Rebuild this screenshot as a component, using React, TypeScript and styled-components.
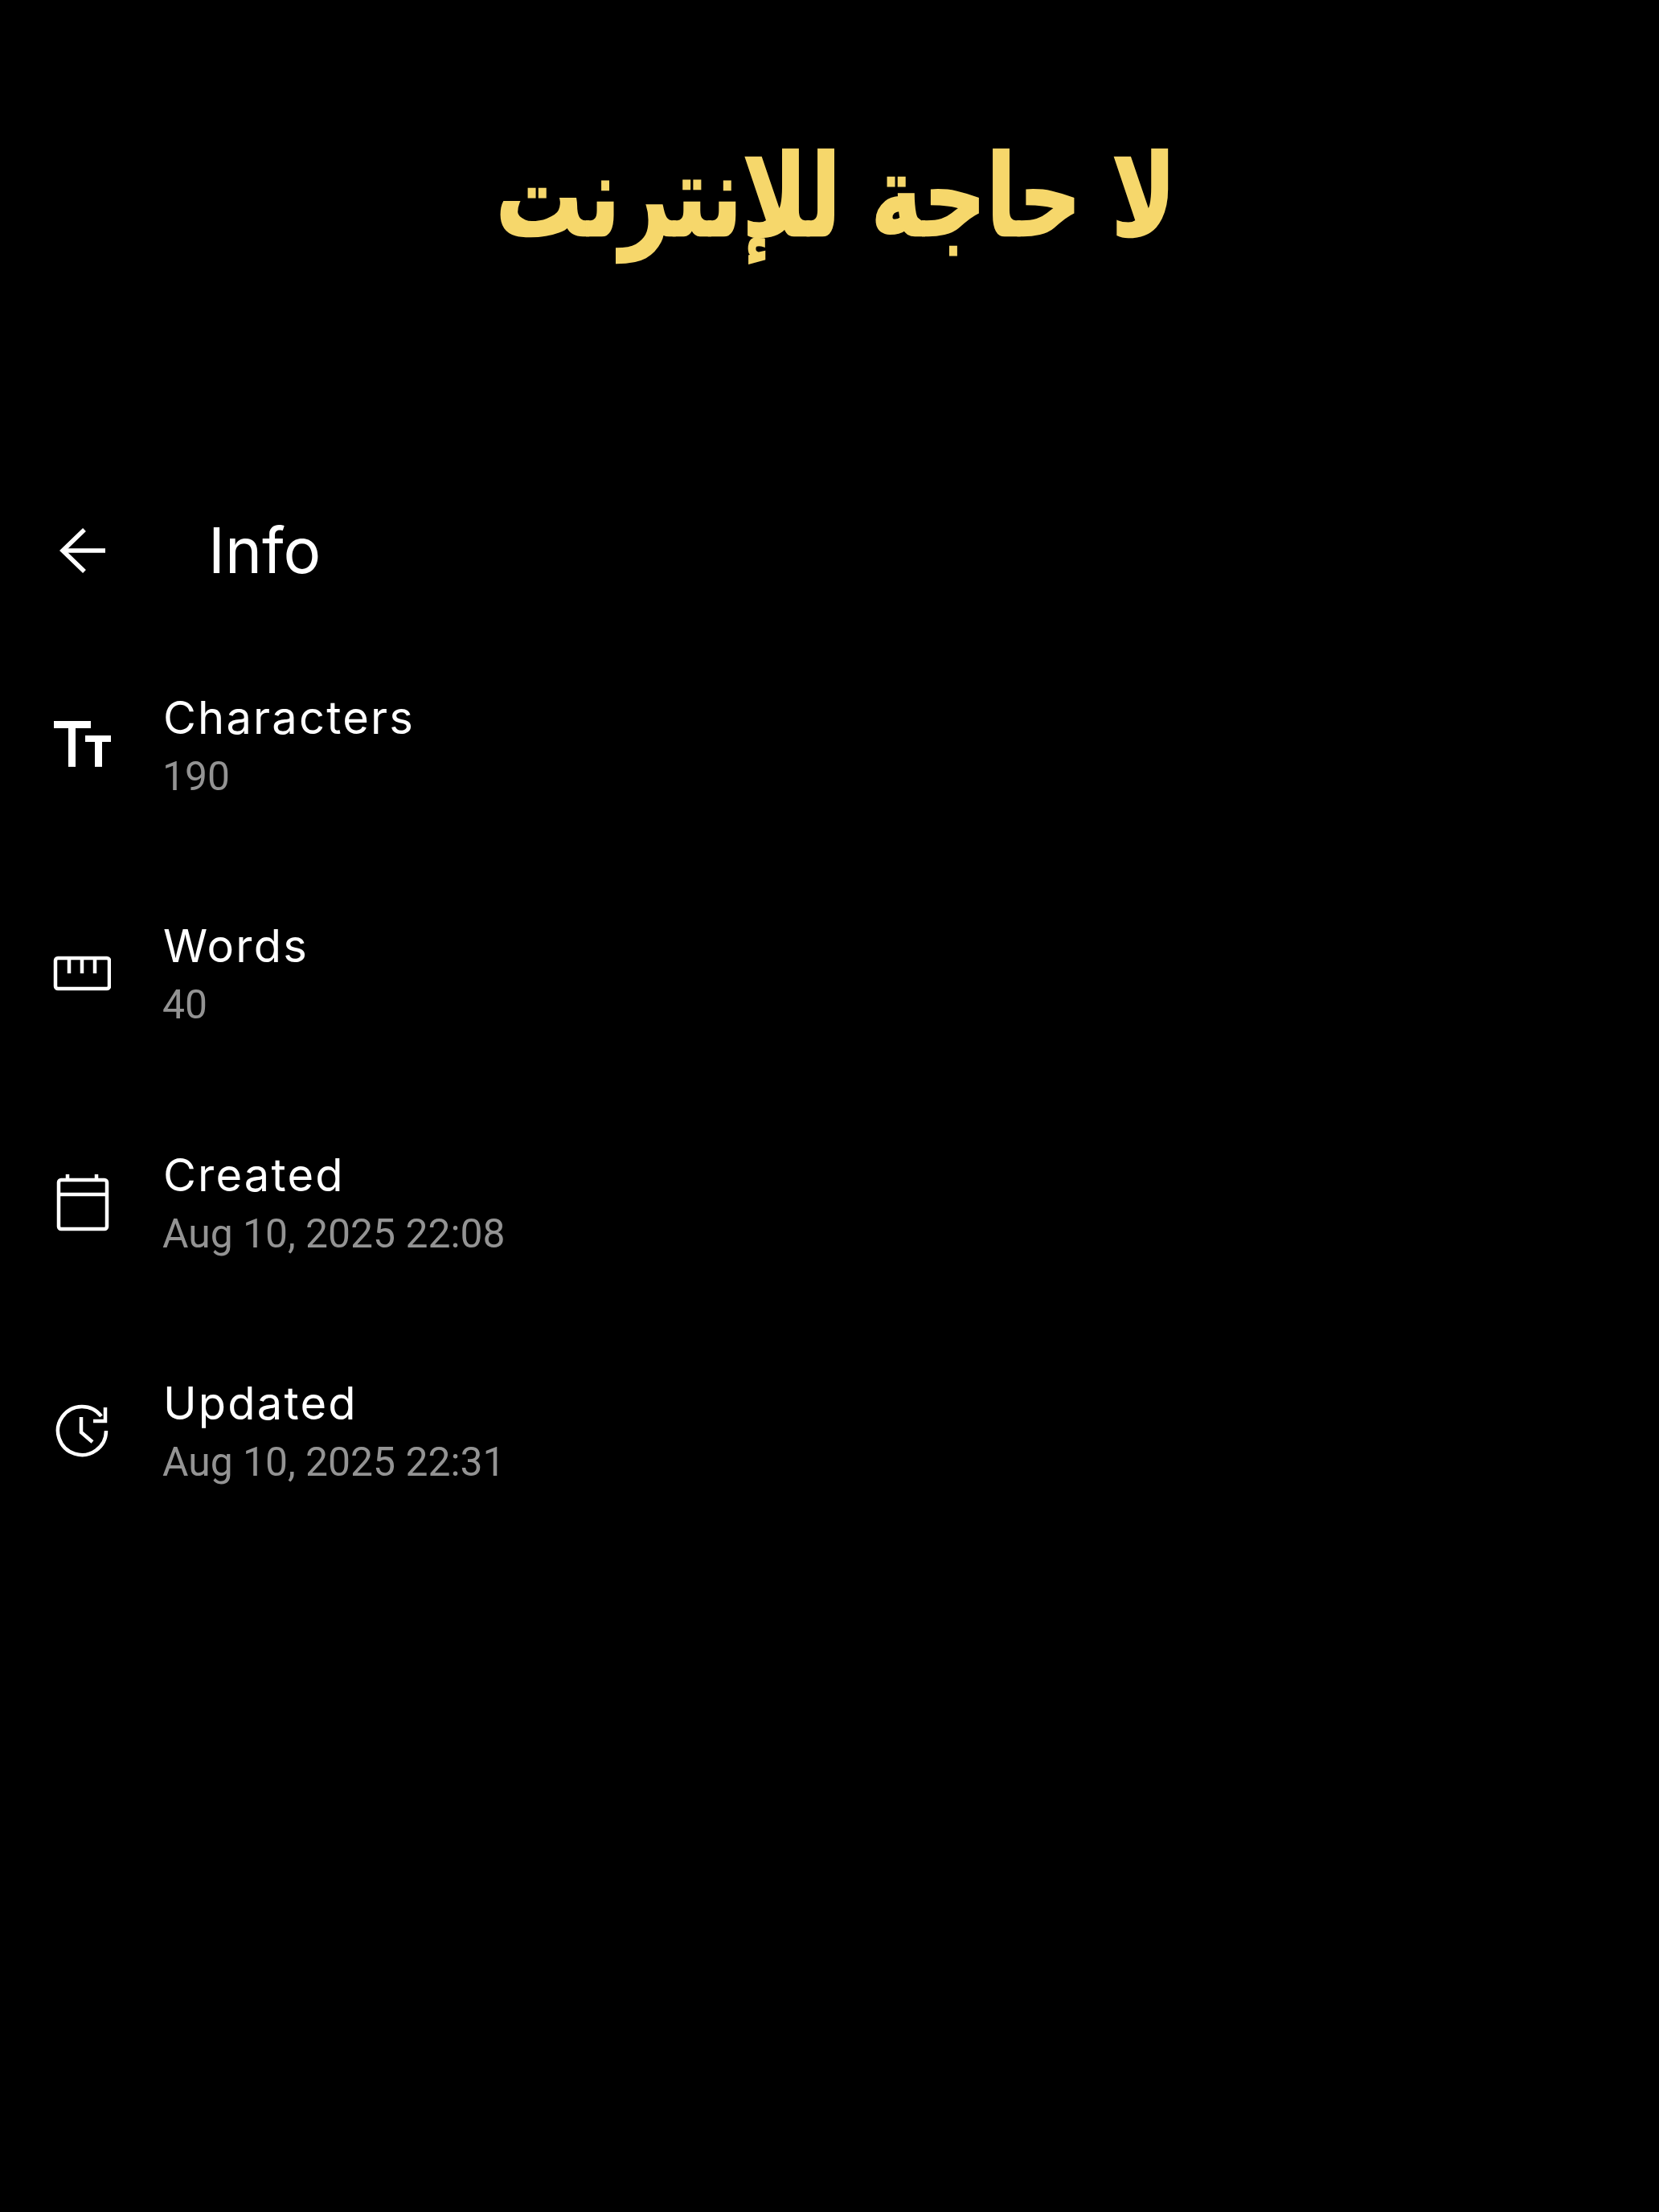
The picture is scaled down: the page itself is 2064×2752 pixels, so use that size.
import React from 'react';
import styled, {createGlobalStyle} from 'styled-components';

const GlobalStyle = createGlobalStyle`
  html, body {
    margin: 0;
    background: #000;
  }
`;

const BackIcon = () => (
  <svg width="72" height="72" viewBox="0 0 72 72" fill="none" stroke="#fff" strokeWidth="5.5">
    <path d="M65 36H12" />
    <path d="M39 10L12 36L39 62" />
  </svg>
);

const TextSizeIcon = () => (
  <svg width="72" height="72" viewBox="0 0 72 72" fill="#fff">
    <path d="M1 6H47V15H28V63H19V15H1Z" />
    <path d="M40 24H72V32H61V63H52V32H40Z" />
  </svg>
);

const RulerIcon = () => (
  <svg width="72" height="72" viewBox="0 0 72 72" fill="none" stroke="#fff" strokeWidth="4.5" strokeLinejoin="round">
    <rect x="3" y="17" width="67" height="38" rx="3" />
    <path d="M20 18V36M36 18V36M52 18V36" />
  </svg>
);

const CalendarIcon = () => (
  <svg width="72" height="72" viewBox="0 0 72 72" fill="none" stroke="#fff" strokeWidth="4.5" strokeLinejoin="round">
    <rect x="7" y="8" width="60" height="61" rx="3" />
    <path d="M7 26H67M18 1V8M54 1V8" />
  </svg>
);

const HistoryIcon = () => (
  <svg width="72" height="72" viewBox="0 0 72 72" fill="none" stroke="#fff" strokeWidth="4.5">
    <path d="M66 36A30 30 0 1 1 60 18" />
    <path d="M65 7V24H50" />
    <path d="M35 19V38L49 50" />
  </svg>
);

const rows = [
  {icon: <TextSizeIcon />, label: 'Characters', value: '190'},
  {icon: <RulerIcon />, label: 'Words', value: '40'},
  {icon: <CalendarIcon />, label: 'Created', value: 'Aug 10, 2025 22:08'},
  {icon: <HistoryIcon />, label: 'Updated', value: 'Aug 10, 2025 22:31'},
];

export default function App() {
  return (
    <Page>
      <GlobalStyle />
      <Banner>
        <Slogan dir="rtl" lang="ar">لا حاجة للإنترنت</Slogan>
      </Banner>
      <Toolbar>
        <BackButton>
          <BackIcon />
        </BackButton>
        <Title>Info</Title>
      </Toolbar>
      <List>
        {rows.map(row => (
          <Row key={row.label}>
            <RowIcon>{row.icon}</RowIcon>
            <RowText>
              <Label>{row.label}</Label>
              <Value>{row.value}</Value>
            </RowText>
          </Row>
        ))}
      </List>
    </Page>
  );
}

const Page = styled.div`
  width: 2064px;
  height: 2752px;
  background: #000;
  color: #fff;
  overflow: hidden;
`;

const Banner = styled.div`
  height: 632px;
  padding: 154px 0 0 16px;
  box-sizing: border-box;
  display: flex;
  justify-content: center;
  align-items: flex-start;
`;

const Slogan = styled.h1`
  margin: 0;
  font-family: 'DejaVu Sans', serif;
  font-size: 108px;
  line-height: 200px;
  font-weight: 700;
  color: #f6d76b;
  -webkit-text-stroke: 2px #f6d76b;
  transform: scaleY(1.3);
  transform-origin: 50% 65%;
`;

const Toolbar = styled.div`
  height: 106px;
  display: flex;
  align-items: center;
`;

const BackButton = styled.div`
  width: 259px;
  padding-left: 66px;
  box-sizing: border-box;
  display: flex;
  align-items: center;
`;

const Title = styled.div`
  font-family: Inter, sans-serif;
  font-size: 78px;
  line-height: 106px;
`;

const List = styled.div`
  padding-top: 119px;
  display: flex;
  flex-direction: column;
`;

const Row = styled.div`
  height: 284.4px;
  display: flex;
  align-items: flex-start;
`;

const RowIcon = styled.div`
  width: 203px;
  height: 140px;
  padding-left: 66px;
  box-sizing: border-box;
  display: flex;
  align-items: center;
`;

const RowText = styled.div`
  display: flex;
  flex-direction: column;
`;

const Label = styled.div`
  font-family: Inter, sans-serif;
  font-size: 56px;
  line-height: 72px;
  letter-spacing: 2.2px;
`;

const Value = styled.div`
  margin-left: -1px;
  font-family: Roboto, sans-serif;
  font-size: 49.8px;
  line-height: 74px;
  color: #939393;
`;
